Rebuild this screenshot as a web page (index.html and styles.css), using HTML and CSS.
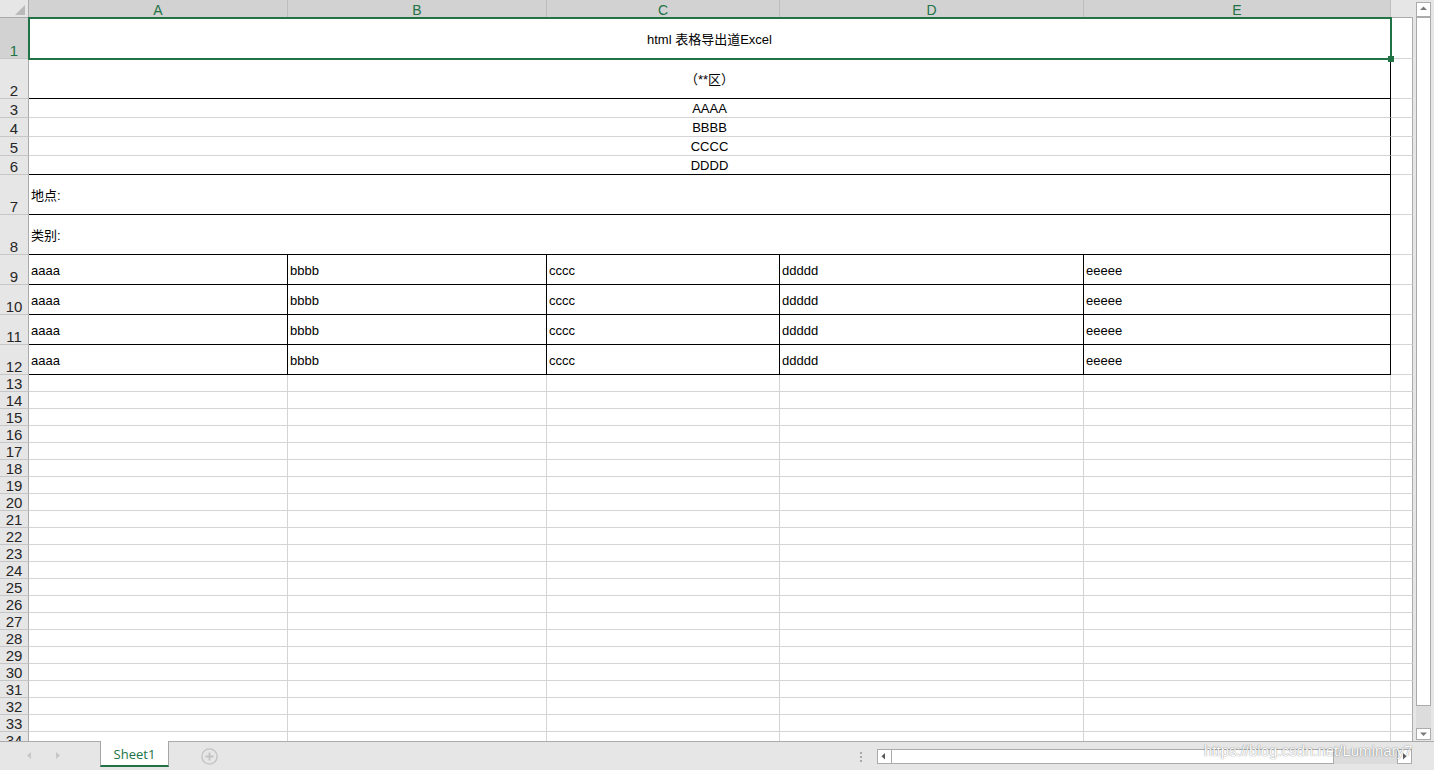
FILE: index.html
```html
<!DOCTYPE html>
<html lang="zh-CN">
<head>
<meta charset="utf-8">
<title>Sheet1</title>
<link rel="stylesheet" href="styles.css">
</head>
<body>
<div class="main">
  <div class="sheet">
    <div class="corner"><svg width="28" height="17" viewBox="0 0 28 17"><polygon points="25,5 25,15 15,15" fill="#b9b9b9"/></svg></div>
    <div class="ch sel">A</div>
    <div class="ch sel">B</div>
    <div class="ch sel">C</div>
    <div class="ch sel">D</div>
    <div class="ch sel">E</div>
    <div class="ch last"></div>

    <div class="rh sel">1</div><div class="c m ctr br">html 表格导出道Excel</div><div class="c x"></div>
    <div class="rh">2</div><div class="c m ctr br bb">（**区）</div><div class="c x"></div>
    <div class="rh">3</div><div class="c m ctr br">AAAA</div><div class="c x"></div>
    <div class="rh">4</div><div class="c m ctr br">BBBB</div><div class="c x"></div>
    <div class="rh">5</div><div class="c m ctr br">CCCC</div><div class="c x"></div>
    <div class="rh">6</div><div class="c m ctr br bb">DDDD</div><div class="c x"></div>
    <div class="rh">7</div><div class="c m br bb">地点:</div><div class="c x"></div>
    <div class="rh">8</div><div class="c m br bb">类别:</div><div class="c x"></div>

    <div class="rh">9</div><div class="c br bb d">aaaa</div><div class="c br bb d">bbbb</div><div class="c br bb d">cccc</div><div class="c br bb d">ddddd</div><div class="c br bb d">eeeee</div><div class="c x"></div>
    <div class="rh">10</div><div class="c br bb d">aaaa</div><div class="c br bb d">bbbb</div><div class="c br bb d">cccc</div><div class="c br bb d">ddddd</div><div class="c br bb d">eeeee</div><div class="c x"></div>
    <div class="rh">11</div><div class="c br bb d">aaaa</div><div class="c br bb d">bbbb</div><div class="c br bb d">cccc</div><div class="c br bb d">ddddd</div><div class="c br bb d">eeeee</div><div class="c x"></div>
    <div class="rh">12</div><div class="c br bb d">aaaa</div><div class="c br bb d">bbbb</div><div class="c br bb d">cccc</div><div class="c br bb d">ddddd</div><div class="c br bb d">eeeee</div><div class="c x"></div>

    <div class="rh">13</div><div class="c"></div><div class="c"></div><div class="c"></div><div class="c"></div><div class="c"></div><div class="c x"></div>
    <div class="rh">14</div><div class="c"></div><div class="c"></div><div class="c"></div><div class="c"></div><div class="c"></div><div class="c x"></div>
    <div class="rh">15</div><div class="c"></div><div class="c"></div><div class="c"></div><div class="c"></div><div class="c"></div><div class="c x"></div>
    <div class="rh">16</div><div class="c"></div><div class="c"></div><div class="c"></div><div class="c"></div><div class="c"></div><div class="c x"></div>
    <div class="rh">17</div><div class="c"></div><div class="c"></div><div class="c"></div><div class="c"></div><div class="c"></div><div class="c x"></div>
    <div class="rh">18</div><div class="c"></div><div class="c"></div><div class="c"></div><div class="c"></div><div class="c"></div><div class="c x"></div>
    <div class="rh">19</div><div class="c"></div><div class="c"></div><div class="c"></div><div class="c"></div><div class="c"></div><div class="c x"></div>
    <div class="rh">20</div><div class="c"></div><div class="c"></div><div class="c"></div><div class="c"></div><div class="c"></div><div class="c x"></div>
    <div class="rh">21</div><div class="c"></div><div class="c"></div><div class="c"></div><div class="c"></div><div class="c"></div><div class="c x"></div>
    <div class="rh">22</div><div class="c"></div><div class="c"></div><div class="c"></div><div class="c"></div><div class="c"></div><div class="c x"></div>
    <div class="rh">23</div><div class="c"></div><div class="c"></div><div class="c"></div><div class="c"></div><div class="c"></div><div class="c x"></div>
    <div class="rh">24</div><div class="c"></div><div class="c"></div><div class="c"></div><div class="c"></div><div class="c"></div><div class="c x"></div>
    <div class="rh">25</div><div class="c"></div><div class="c"></div><div class="c"></div><div class="c"></div><div class="c"></div><div class="c x"></div>
    <div class="rh">26</div><div class="c"></div><div class="c"></div><div class="c"></div><div class="c"></div><div class="c"></div><div class="c x"></div>
    <div class="rh">27</div><div class="c"></div><div class="c"></div><div class="c"></div><div class="c"></div><div class="c"></div><div class="c x"></div>
    <div class="rh">28</div><div class="c"></div><div class="c"></div><div class="c"></div><div class="c"></div><div class="c"></div><div class="c x"></div>
    <div class="rh">29</div><div class="c"></div><div class="c"></div><div class="c"></div><div class="c"></div><div class="c"></div><div class="c x"></div>
    <div class="rh">30</div><div class="c"></div><div class="c"></div><div class="c"></div><div class="c"></div><div class="c"></div><div class="c x"></div>
    <div class="rh">31</div><div class="c"></div><div class="c"></div><div class="c"></div><div class="c"></div><div class="c"></div><div class="c x"></div>
    <div class="rh">32</div><div class="c"></div><div class="c"></div><div class="c"></div><div class="c"></div><div class="c"></div><div class="c x"></div>
    <div class="rh">33</div><div class="c"></div><div class="c"></div><div class="c"></div><div class="c"></div><div class="c"></div><div class="c x"></div>
    <div class="rh">34</div><div class="c"></div><div class="c"></div><div class="c"></div><div class="c"></div><div class="c"></div><div class="c x"></div>

    <div class="selbox"><span class="handle"></span></div>
  </div>

  <div class="vs">
    <div class="vbtn"><svg width="13" height="13" viewBox="0 0 13 13"><polygon points="3,7 10,7 6.5,3.5" fill="#7a7a7a"/></svg></div>
    <div class="vthumb"></div>
    <div class="vtrack"></div>
    <div class="vbtn down"><svg width="13" height="10" viewBox="0 0 13 10"><polygon points="3,3.5 10,3.5 6.5,7" fill="#7a7a7a"/></svg></div>
  </div>
</div>

<div class="bar">
  <svg class="nav" width="100" height="28" viewBox="0 0 100 28"><polygon points="31,10 31,17 27,13.5" fill="#c6c6c6"/><polygon points="56,10 56,17 60,13.5" fill="#c6c6c6"/></svg>
  <div class="tab">Sheet1</div>
  <svg class="plus" width="19" height="19" viewBox="0 0 19 19"><circle cx="9.5" cy="9.5" r="7.6" fill="none" stroke="#c2c2c2" stroke-width="1.4"/><path d="M9.5 5.5v8M5.5 9.5h8" stroke="#c2c2c2" stroke-width="1.8"/></svg>
  <div class="dots"><span></span><span></span><span></span></div>
  <div class="hs">
    <div class="hbtn"><svg width="13" height="13" viewBox="0 0 13 13"><polygon points="7,3 7,9.5 3.5,6.25" fill="#5a5a5a"/></svg></div>
    <div class="hthumb"></div>
    <div class="htrack"></div>
    <div class="hbtn"><svg width="13" height="13" viewBox="0 0 13 13"><polygon points="5,3 5,9.5 8.5,6.25" fill="#5a5a5a"/></svg></div>
  </div>
  <div class="wm">https://blog.csdn.net/Luminary7</div>
</div>
</body>
</html>
```

FILE: styles.css
```css
* {
  box-sizing: border-box;
}

html,
body {
  margin: 0;
  padding: 0;
}

body {
  width: 1434px;
  height: 770px;
  overflow: hidden;
  background: #e6e6e6;
  font-family: "Liberation Sans", "Noto Sans CJK SC", sans-serif;
  color: #000;
}

.main {
  display: flex;
  height: 741px;
}

.sheet {
  position: relative;
  width: 1413px;
  height: 741px;
  overflow: hidden;
  display: grid;
  grid-template-columns: 29px 259px 259px 233px 304px 307px 22px;
  grid-template-rows: 18px 41px 40px 19px 19px 19px 19px 40px 40px 30px 30px 30px 30px;
  grid-auto-rows: 17px;
  background: #fff;
}

.corner {
  background: #e6e6e6;
  border-right: 1px solid #ababab;
  border-bottom: 1px solid #ababab;
}

.corner svg {
  display: block;
}

.ch {
  background: #e6e6e6;
  border-right: 1px solid #bdbdbd;
  border-bottom: 1px solid #ababab;
  font-size: 14px;
  line-height: 17px;
  padding-top: 2px;
  text-align: center;
  color: #444;
}

.ch.sel {
  background: #d2d2d2;
  color: #217346;
}

.ch.last {
  border-right: none;
}

.rh {
  background: #e6e6e6;
  border-right: 1px solid #ababab;
  border-bottom: 1px solid #c6c6c6;
  font-size: 15px;
  line-height: 15px;
  color: #262626;
  display: flex;
  align-items: flex-end;
  justify-content: center;
}

.rh.sel {
  background: #d2d2d2;
  color: #217346;
}

.c {
  border-right: 1px solid #d4d4d4;
  border-bottom: 1px solid #d4d4d4;
  display: flex;
  align-items: center;
  padding-left: 2px;
  font-size: 13px;
  white-space: nowrap;
  overflow: hidden;
}

.c.d {
  padding-top: 1px;
}

.m {
  grid-column: span 5;
}

.ctr {
  justify-content: center;
  padding-left: 0;
}

.bb {
  border-bottom-color: #000;
}

.br {
  border-right-color: #000;
}

.x {
  border-right-color: #ababab;
}

.selbox {
  position: absolute;
  left: 28px;
  top: 17px;
  width: 1364px;
  height: 43px;
  border: 2px solid #217346;
  pointer-events: none;
}

.handle {
  position: absolute;
  right: -4px;
  bottom: -4px;
  width: 6px;
  height: 6px;
  background: #217346;
}

/* vertical scrollbar */
.vs {
  width: 21px;
  height: 741px;
  padding: 2px 3px 1px 3px;
  display: flex;
  flex-direction: column;
}

.vbtn {
  height: 15px;
  border: 1px solid #ababab;
  background: #fff;
}

.vbtn svg {
  display: block;
}

.vbtn.down {
  height: 12px;
}

.vthumb {
  height: 689px;
  border: 1px solid #ababab;
  background: #fff;
}

.vtrack {
  flex: 1;
  background: #dcdcdc;
}

/* bottom bar */
.bar {
  position: relative;
  height: 29px;
  border-top: 1px solid #ababab;
  display: flex;
  align-items: flex-start;
}

.nav {
  display: block;
  flex: none;
}

.tab {
  flex: none;
  width: 69px;
  height: 26px;
  margin-top: -1px;
  background: #fff;
  border-left: 1px solid #a6a6a6;
  border-right: 1px solid #a6a6a6;
  border-bottom: 2px solid #217346;
  font-family: "Open Sans", "Liberation Sans", sans-serif;
  font-size: 13px;
  color: #217346;
  display: flex;
  align-items: center;
  justify-content: center;
  padding-top: 1px;
}

.plus {
  display: block;
  flex: none;
  margin-left: 31px;
  margin-top: 5px;
}

.dots {
  flex: none;
  margin-left: 641px;
  margin-top: 10px;
  width: 2px;
  display: flex;
  flex-direction: column;
  gap: 2px;
}

.dots span {
  display: block;
  width: 2px;
  height: 2px;
  background: #a8a8a8;
}

.hs {
  flex: none;
  margin-left: 15px;
  margin-top: 7px;
  width: 535px;
  height: 15px;
  display: flex;
}

.hbtn {
  width: 15px;
  height: 15px;
  border: 1px solid #ababab;
  background: #fff;
}

.hbtn svg {
  display: block;
}

.hthumb {
  width: 442px;
  height: 15px;
  border: 1px solid #ababab;
  border-left: none;
  background: #fff;
}

.htrack {
  flex: 1;
  background: #dcdcdc;
}

.wm {
  position: absolute;
  left: 1204px;
  top: 0;
  font-size: 15px;
  line-height: 18px;
  white-space: nowrap;
  color: #fff;
  opacity: 0.9;
  text-shadow: 0 0 1px rgba(0, 0, 0, 0.5), 0 0 2px rgba(0, 0, 0, 0.2);
}
```
